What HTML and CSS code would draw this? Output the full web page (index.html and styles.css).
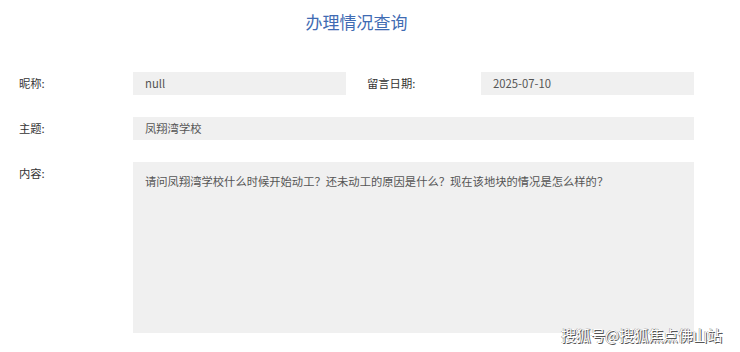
FILE: index.html
```html
<!DOCTYPE html>
<html lang="zh">
<head>
<meta charset="utf-8">
<title>办理情况查询</title>
<link rel="stylesheet" href="styles.css">
</head>
<body>
<div class="page">
  <h1 class="title">办理情况查询</h1>
  <div class="form">
    <div class="row">
      <div class="label">昵称:</div>
      <div class="field field-half">null</div>
      <div class="label label-second">留言日期:</div>
      <div class="field field-half">2025-07-10</div>
    </div>
    <div class="row">
      <div class="label">主题:</div>
      <div class="field field-full">凤翔湾学校</div>
    </div>
    <div class="row row-top">
      <div class="label">内容:</div>
      <div class="field field-area">请问凤翔湾学校什么时候开始动工？还未动工的原因是什么？现在该地块的情况是怎么样的？</div>
    </div>
  </div>
</div>
<div class="watermark">搜狐号@搜狐焦点佛山站</div>
</body>
</html>
```

FILE: styles.css
```css
html, body {
  margin: 0;
  padding: 0;
  background: #ffffff;
}
body {
  font-family: "Noto Sans CJK SC", "Noto Sans", sans-serif;
  color: #333333;
  width: 740px;
  height: 352px;
  overflow: hidden;
  position: relative;
}
.page {
  margin-left: 19px;
  width: 675px;
}
.title {
  margin: 0;
  padding-top: 10px;
  height: 72px;
  box-sizing: border-box;
  text-align: center;
  font-size: 17px;
  line-height: 24px;
  font-weight: normal;
  color: #3f6bb3;
}
.form {
  display: flex;
  flex-direction: column;
  gap: 22px;
}
.row {
  display: flex;
  align-items: center;
}
.row-top {
  align-items: flex-start;
}
.label {
  width: 114px;
  font-size: 11.3px;
  line-height: 23px;
  color: #333333;
  flex: none;
}
.label-second {
  width: 114px;
  padding-left: 21px;
}
.field {
  background: #f0f0f0;
  color: #555555;
  font-size: 11.3px;
  padding-left: 12px;
  box-sizing: border-box;
}
.field-half {
  width: 213px;
  height: 23px;
  line-height: 23px;
}
.field-full {
  flex: 1;
  height: 22.5px;
  line-height: 22px;
}
.field-area {
  flex: 1;
  height: 171px;
  padding-top: 11px;
  line-height: 16px;
}
.watermark {
  position: absolute;
  left: 561px;
  top: 325px;
  font-size: 15px;
  line-height: 20px;
  color: #ffffff;
  letter-spacing: -0.3px;
  text-shadow: 1px 1px 0 #555, -0.5px 0 0 #999, 0 -0.5px 0 #999;
}
```
